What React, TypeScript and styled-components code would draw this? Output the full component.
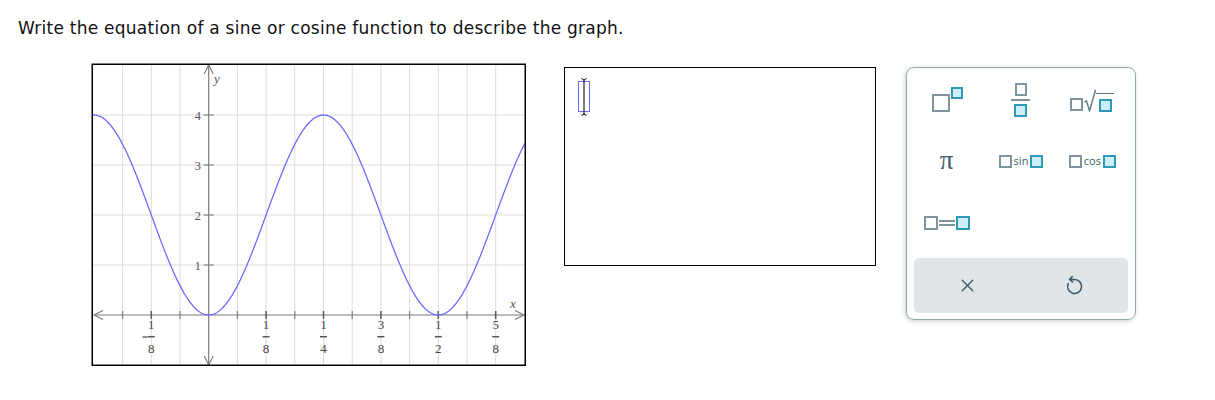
import React from 'react'
import styled, { createGlobalStyle } from 'styled-components'
import { X } from 'lucide-react'

const GlobalStyle = createGlobalStyle`
  html, body {
    margin: 0;
    padding: 0;
    background: #fff;
  }
`

const Page = styled.div`
  padding: 18px 18px 0 18px;
  font-family: 'DejaVu Sans', Verdana, sans-serif;
`

const Prompt = styled.div`
  font-size: 17px;
  letter-spacing: 0.25px;
  line-height: 20px;
  color: #111;
`

const Row = styled.div`
  display: flex;
  align-items: flex-start;
  margin-top: 25px;
`

const GraphSvg = styled.svg`
  display: block;
  margin-left: 73px;
  flex: none;
`

const AnswerBox = styled.div`
  width: 310px;
  height: 197px;
  margin: 4px 0 0 37px;
  border: 1px solid #000;
  box-sizing: content-box;
  flex: none;
`

const CursorSlot = styled.div`
  margin: 13px 0 0 13px;
  width: 10px;
  height: 29px;
  border: 1.5px solid #6b6bff;
  display: flex;
  justify-content: center;
  align-items: center;
`

const Keypad = styled.div`
  margin: 4px 0 0 30px;
  border: 1px solid #97a8ad;
  border-radius: 8px;
  box-shadow: -1px 1px 4px rgba(40, 60, 70, 0.25);
  padding: 1px 7px 6px 7px;
  box-sizing: border-box;
  width: 230px;
  height: 253px;
  display: flex;
  flex-direction: column;
  flex: none;
`

const KeyGrid = styled.div`
  display: grid;
  grid-template-columns: repeat(3, 1fr);
  grid-auto-rows: 61.5px;
`

const Key = styled.div`
  display: flex;
  align-items: center;
  justify-content: center;
  color: #3e5f6b;
`

const ActionBar = styled.div`
  margin-top: 4px;
  height: 55px;
  background: #e0e5e8;
  border-radius: 5px;
  display: grid;
  grid-template-columns: 1fr 1fr;
`

const ActionKey = styled.div`
  display: flex;
  align-items: center;
  justify-content: center;
  color: #3d5c68;
`

const Slot = styled.span<{ $filled?: boolean; $w?: number; $h?: number }>`
  display: inline-block;
  box-sizing: border-box;
  width: ${(p) => p.$w ?? 13}px;
  height: ${(p) => p.$h ?? 13}px;
  border: 2px solid ${(p) => (p.$filled ? '#2e9ab6' : '#7f949b')};
  background: ${(p) => (p.$filled ? '#cdeef6' : '#fff')};
  flex: none;
`

const PowerGroup = styled.span`
  display: inline-flex;
  align-items: flex-start;
  margin-right: 4px;
  & > span:first-child {
    margin-top: 7px;
  }
  & > span:last-child {
    margin-left: 1px;
  }
`

const FractionGroup = styled.span`
  display: inline-flex;
  flex-direction: column;
  align-items: center;
`

const FractionBar = styled.span`
  display: block;
  width: 19px;
  height: 2px;
  background: #7f949b;
  margin: 3px 0 3px;
`

const RadicalGroup = styled.span`
  display: inline-flex;
  align-items: flex-end;
  margin-bottom: -2px;
`

const Radicand = styled.span`
  display: inline-flex;
  border-top: 1.5px solid #5f7c86;
  padding: 5px 2px 0 3px;
`

const PiGlyph = styled.span`
  font-family: 'Liberation Serif', 'DejaVu Serif', serif;
  font-size: 27px;
  line-height: 1;
  color: #3e5f6b;
  margin: 0 6px 2px 0;
`

const TrigGroup = styled.span`
  display: inline-flex;
  align-items: center;
  gap: 2px;
`

const TrigName = styled.span`
  font-family: 'Open Sans', 'DejaVu Sans', sans-serif;
  font-size: 11px;
  line-height: 1;
  color: #3e5f6b;
  margin-top: -1px;
`

const EqualsGroup = styled.span`
  display: inline-flex;
  align-items: center;
  gap: 1px;
  margin-right: 6px;
  margin-top: 1px;
`

const EqualSign = styled.span`
  display: inline-block;
  width: 16px;
  height: 6px;
  box-sizing: border-box;
  border-top: 2px solid #7f949b;
  border-bottom: 2px solid #7f949b;
`

const OX = 117.7
const OY = 252
const UX = 459.2
const UY = 50
const px = (u: number) => OX + u * UX
const py = (v: number) => OY - v * UY

const curvePoints = (() => {
  const pts: string[] = []
  for (let u = -0.2535; u <= 0.6895; u += 0.0015) {
    const v = 2 - 2 * Math.cos(4 * Math.PI * u)
    pts.push(`${px(u).toFixed(2)},${py(v).toFixed(2)}`)
  }
  return pts.join(' ')
})()

const fracLabels = [
  { k: -2, n: '1', d: '8', neg: true },
  { k: 2, n: '1', d: '8' },
  { k: 4, n: '1', d: '4' },
  { k: 6, n: '3', d: '8' },
  { k: 8, n: '1', d: '2' },
  { k: 10, n: '5', d: '8' },
]

const serif = 'Liberation Serif, DejaVu Serif, serif'

const Graph = () => {
  const verticals: number[] = []
  for (let k = -3; k <= 10; k++) verticals.push(k)
  return (
    <GraphSvg width={436} height={304} viewBox="0 0 436 304">
      {verticals.map((k) => (
        <line
          key={'gv' + k}
          x1={px(k / 16)}
          x2={px(k / 16)}
          y1={2}
          y2={302}
          stroke="#dcdcdc"
          strokeWidth={1}
        />
      ))}
      {[1, 2, 3, 4].map((v) => (
        <line key={'gh' + v} x1={2} x2={434} y1={py(v)} y2={py(v)} stroke="#dcdcdc" strokeWidth={1} />
      ))}

      <g stroke="#7a7a7a" strokeWidth={1.1} fill="none">
        <line x1={3} x2={433} y1={OY} y2={OY} />
        <polyline points={`12,${OY - 4.5} 3,${OY} 12,${OY + 4.5}`} />
        <polyline points={`424,${OY - 4.5} 433,${OY} 424,${OY + 4.5}`} />
        <line x1={OX} x2={OX} y1={2} y2={302} />
        <polyline points={`${OX - 4.5},11 ${OX},2 ${OX + 4.5},11`} />
        <polyline points={`${OX - 4.5},293 ${OX},302 ${OX + 4.5},293`} />
        {verticals
          .filter((k) => k !== 0)
          .map((k) => (
            <line
              key={'tx' + k}
              x1={px(k / 16)}
              x2={px(k / 16)}
              y1={OY - 4}
              y2={OY + 4}
              stroke={k % 2 === 0 ? '#5a5a5a' : '#7a7a7a'}
              strokeWidth={k % 2 === 0 ? 1.5 : 1.1}
            />
          ))}
        {[1, 2, 3, 4].map((v) => (
          <line key={'ty' + v} x1={OX - 5} x2={OX + 5} y1={py(v)} y2={py(v)} />
        ))}
      </g>

      {[1, 2, 3, 4].map((v) => (
        <text
          key={'ly' + v}
          x={110}
          y={py(v) + 4.5}
          textAnchor="end"
          fontFamily={serif}
          fontSize={13}
          fill="#555"
        >
          {v}
        </text>
      ))}
      <text x={123} y={20} fontFamily={serif} fontStyle="italic" fontSize={13} fill="#555">
        y
      </text>
      <text x={419} y={245} fontFamily={serif} fontStyle="italic" fontSize={13} fill="#555">
        x
      </text>

      {fracLabels.map((f) => {
        const cx = px(f.k / 16)
        return (
          <g key={'lx' + f.k}>
            {f.neg && <line x1={51.5} x2={56.5} y1={274} y2={274} stroke="#444" strokeWidth={1.2} />}
            <text x={cx} y={265.5} textAnchor="middle" fontFamily={serif} fontSize={13} fill="#444">
              {f.n}
            </text>
            <line x1={cx - 3.5} x2={cx + 3.5} y1={273.7} y2={273.7} stroke="#555" strokeWidth={1.5} />
            <text x={cx} y={289.5} textAnchor="middle" fontFamily={serif} fontSize={13} fill="#444">
              {f.d}
            </text>
          </g>
        )
      })}

      <polyline points={curvePoints} fill="none" stroke="#6c6cff" strokeWidth={1.3} />

      <rect x={1.25} y={1.25} width={433} height={301} fill="none" stroke="#000" strokeWidth={1.5} />
    </GraphSvg>
  )
}

const IBeam = () => (
  <svg width={8} height={38} viewBox="0 0 8 38" style={{ overflow: 'visible' }}>
    <g stroke="#222" strokeWidth={1.2} fill="none">
      <line x1={4} x2={4} y1={1} y2={37} />
      <path d="M1.5 0.5 Q4 1.5 4 2.5 Q4 1.5 6.5 0.5" />
      <path d="M1.5 37.5 Q4 36.5 4 35.5 Q4 36.5 6.5 37.5" />
    </g>
  </svg>
)

const UndoIcon = () => (
  <svg width={20} height={22} viewBox="0 0 20 22" fill="none">
    <path d="M9.5 5.5 A7 7 0 1 1 3.2 9.6" stroke="#3d5c68" strokeWidth={1.6} strokeLinecap="round" />
    <path
      d="M7.2 2.6 L4.6 5.4 L7.6 7.8"
      stroke="#3d5c68"
      strokeWidth={1.6}
      strokeLinecap="round"
      strokeLinejoin="round"
    />
    <path d="M4.8 5.4 L9.5 5.5" stroke="#3d5c68" strokeWidth={1.6} strokeLinecap="round" />
  </svg>
)

const RadicalSign = () => (
  <svg width={12} height={23} viewBox="0 0 12 23" style={{ display: 'block' }}>
    <path d="M0.5 13 L2.5 12 L5.5 22 L11.6 0.8" stroke="#5f7c86" strokeWidth={1.4} fill="none" />
  </svg>
)

export default function App() {
  return (
    <Page>
      <GlobalStyle />
      <Prompt>Write the equation of a sine or cosine function to describe the graph.</Prompt>
      <Row>
        <Graph />
        <AnswerBox>
          <CursorSlot>
            <IBeam />
          </CursorSlot>
        </AnswerBox>
        <Keypad>
          <KeyGrid>
            <Key>
              <PowerGroup>
                <Slot $w={18} $h={18} />
                <Slot $filled $w={12} $h={12} />
              </PowerGroup>
            </Key>
            <Key>
              <FractionGroup>
                <Slot $w={12} $h={13} />
                <FractionBar />
                <Slot $filled $w={13} $h={13} />
              </FractionGroup>
            </Key>
            <Key>
              <RadicalGroup>
                <Slot $w={13} $h={13} style={{ marginBottom: 1, marginRight: 1 }} />
                <RadicalSign />
                <Radicand>
                  <Slot $filled $w={13} $h={13} />
                </Radicand>
              </RadicalGroup>
            </Key>
            <Key>
              <PiGlyph>π</PiGlyph>
            </Key>
            <Key>
              <TrigGroup>
                <Slot $w={13} $h={13} />
                <TrigName>sin</TrigName>
                <Slot $filled $w={13} $h={13} />
              </TrigGroup>
            </Key>
            <Key>
              <TrigGroup>
                <Slot $w={13} $h={13} />
                <TrigName>cos</TrigName>
                <Slot $filled $w={13} $h={13} />
              </TrigGroup>
            </Key>
            <Key>
              <EqualsGroup>
                <Slot $w={14} $h={14} />
                <EqualSign />
                <Slot $filled $w={14} $h={14} />
              </EqualsGroup>
            </Key>
          </KeyGrid>
          <ActionBar>
            <ActionKey>
              <X size={21} strokeWidth={1.6} />
            </ActionKey>
            <ActionKey>
              <UndoIcon />
            </ActionKey>
          </ActionBar>
        </Keypad>
      </Row>
    </Page>
  )
}
